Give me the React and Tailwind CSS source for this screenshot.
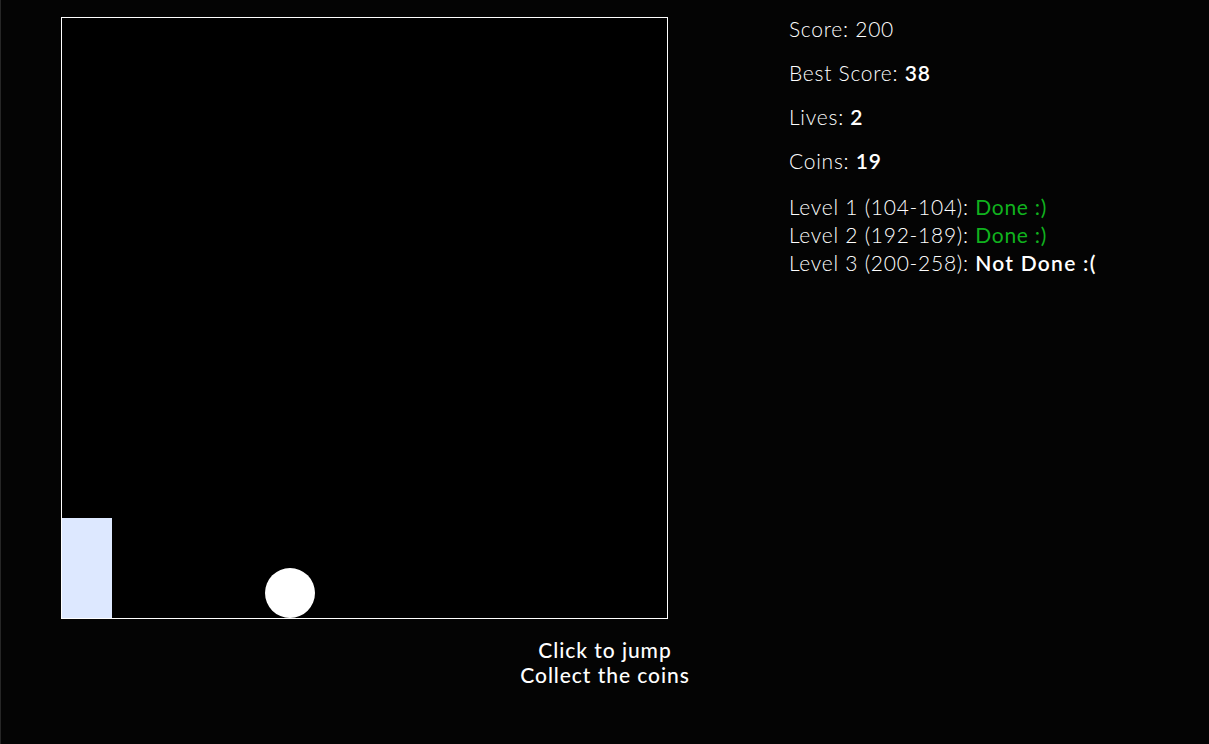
export default function App() {
  const font = { fontFamily: '"Lato", "Open Sans", sans-serif' };
  return (
    <div className="min-h-screen w-full bg-[#040404] text-white border-l border-[#262626]" style={font}>
      <div className="flex flex-row pl-[60px] pt-[17px]">
        <div className="relative w-[607px] h-[602px] border border-white bg-black shrink-0">
          <div className="absolute left-0 bottom-0 w-[50px] h-[100px] bg-[#dde8ff]" />
          <div className="absolute left-[203px] bottom-0 w-[50px] h-[50px] rounded-full bg-white" />
        </div>
        <div className="ml-[121px] text-[21px] tracking-[0.035em]">
          <p className="leading-[24px] font-light">Score: 200</p>
          <p className="leading-[24px] mt-[20px] font-light">
            Best Score: <span className="font-semibold">38</span>
          </p>
          <p className="leading-[24px] mt-[20px] font-light">
            Lives: <span className="font-semibold">2</span>
          </p>
          <p className="leading-[24px] mt-[20px] font-light">
            Coins: <span className="font-semibold">19</span>
          </p>
          <div className="leading-[28px] mt-[20px] font-light">
            <div>
              Level 1 (104-104): <span className="text-[#10b21e] font-normal">Done :)</span>
            </div>
            <div>
              Level 2 (192-189): <span className="text-[#10b21e] font-normal">Done :)</span>
            </div>
            <div>
              Level 3 (200-258): <span className="font-semibold tracking-[0.06em]">Not Done :(</span>
            </div>
          </div>
        </div>
      </div>
      <div className="mt-[18px] text-center text-[21px] leading-[25px] font-medium tracking-[0.045em]">
        <div>Click to jump</div>
        <div>Collect the coins</div>
      </div>
    </div>
  );
}
